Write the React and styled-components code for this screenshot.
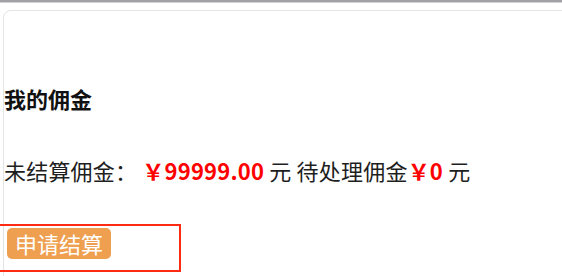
import React from 'react'
import styled, { createGlobalStyle } from 'styled-components'

const GlobalStyle = createGlobalStyle`
    html, body {
        margin: 0;
        padding: 0;
        background: #fff;
        overflow: hidden;
    }
    body {
        font-family: "Noto Sans CJK SC", "Noto Sans", sans-serif;
        color: #222;
    }
`
const Page = styled.div`
    width: 562px;
    height: 276px;
    overflow: hidden;
`
const TopEdge = styled.div`
    height: 2px;
    background: #a2a2a6;
    border-bottom: 1px solid #d0d0d4;
`
const Card = styled.div`
    margin: 7px -20px 0 3px;
    height: 300px;
    border: 1px solid #e4e4e4;
    border-radius: 8px;
    padding: 72px 0 0 0;
`
const Title = styled.h3`
    margin: 0;
    font-size: 22px;
    line-height: 30px;
    font-weight: 700;
    color: #111;
`
const Row = styled.div`
    margin-top: 42px;
    font-size: 22px;
    line-height: 30px;
    color: #1e1e1e;
    letter-spacing: 0.2px;
`
const Money = styled.span`
    color: #ff0000;
    font-weight: 700;
`
const ActionBox = styled.div`
    margin: 39px 0 0 -6px;
    width: 172px;
    height: 42px;
    border: 2px solid #ff2a12;
    padding: 2px 0 0 7px;
    box-sizing: content-box;
`
const Button = styled.button`
    display: block;
    border: none;
    border-radius: 5px;
    background: #eea050;
    color: #fff;
    font-family: inherit;
    font-size: 22px;
    line-height: 31px;
    padding: 0 8px;
    cursor: pointer;
`

function App() {
    return (
        <Page>
            <GlobalStyle />
            <TopEdge />
            <Card>
                <Title>我的佣金</Title>
                <Row>
                    未结算佣金： <Money>￥99999.00</Money> 元 待处理佣金<Money>￥0</Money> 元
                </Row>
                <ActionBox>
                    <Button>申请结算</Button>
                </ActionBox>
            </Card>
        </Page>
    )
}

export default App
